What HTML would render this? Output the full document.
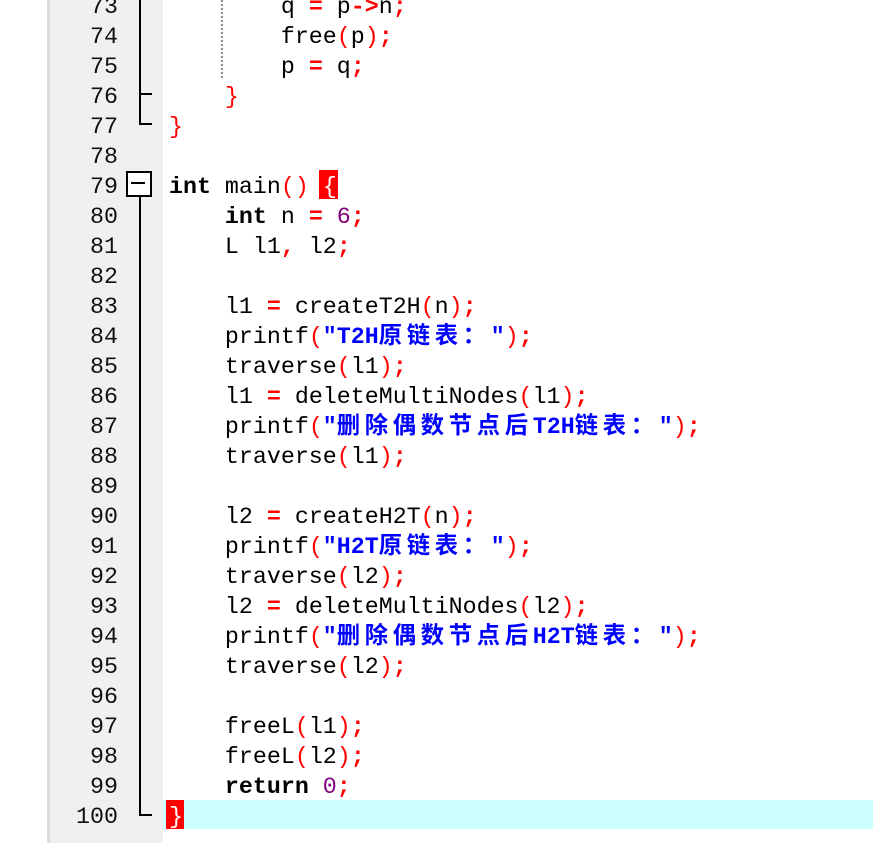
<!DOCTYPE html>
<html><head><meta charset="utf-8"><style>
body{margin:0;width:873px;height:843px;overflow:hidden;background:#fff;position:relative;font-family:"Liberation Mono","Noto Sans CJK SC",monospace;font-size:23.3px}
.g{position:absolute;left:47px;top:0;width:3px;height:843px;background:#dcdcdc}
.g2{position:absolute;left:50px;top:0;width:113px;height:843px;background:#f0f0f0}
.n{position:absolute;left:60px;width:58px;text-align:right;height:30px;line-height:30px;padding-top:2px;color:#111;box-sizing:border-box}
.l{position:absolute;left:169px;height:30px;line-height:30px;padding-top:2px;white-space:pre;color:#000;box-sizing:border-box}
.k{font-weight:bold}.o{color:#f00;font-weight:bold}.p{color:#f00}.d{color:#800080}
.s{color:#00f;font-weight:bold}.c{letter-spacing:4.7px;font-family:"Noto Sans CJK SC",sans-serif;font-size:23.3px;line-height:0}
.v{position:absolute;background:#000}
</style></head><body>
<div class="g"></div><div class="g2"></div>
<div style="position:absolute;left:163px;top:800px;width:710px;height:29px;background:#ccffff"></div>
<div style="position:absolute;left:166px;top:800px;width:18px;height:29px;background:#f00"></div>
<div style="position:absolute;left:319px;top:170px;width:19px;height:29px;background:#f00"></div>
<div style="position:absolute;left:221px;top:0;height:78px;border-left:2px dotted #888"></div>
<div class="v" style="left:139px;top:0;width:2px;height:125px"></div>
<div class="v" style="left:139px;top:93px;width:13px;height:2px"></div>
<div class="v" style="left:139px;top:123px;width:13px;height:2px"></div>
<div style="position:absolute;left:126px;top:171px;width:22px;height:22px;border:2px solid #000;background:#fff"></div>
<div class="v" style="left:131px;top:182px;width:14px;height:2px"></div>
<div class="v" style="left:139px;top:197px;width:2px;height:618px"></div>
<div class="v" style="left:139px;top:814px;width:13px;height:2px"></div>

<div class="n" style="top:-10px">73</div><div class="l" style="top:-10px">        q <span class="o">=</span> p<span class="o">-&gt;</span>n<span class="o">;</span></div>
<div class="n" style="top:20px">74</div><div class="l" style="top:20px">        free<span class="p">(</span>p<span class="p">)</span><span class="o">;</span></div>
<div class="n" style="top:50px">75</div><div class="l" style="top:50px">        p <span class="o">=</span> q<span class="o">;</span></div>
<div class="n" style="top:80px">76</div><div class="l" style="top:80px">    <span class="p">}</span></div>
<div class="n" style="top:110px">77</div><div class="l" style="top:110px"><span class="p">}</span></div>
<div class="n" style="top:140px">78</div>
<div class="n" style="top:170px">79</div><div class="l" style="top:170px"><span class="k">int</span> main<span class="p">()</span> <span class="p" style="color:#fff">{</span></div>
<div class="n" style="top:200px">80</div><div class="l" style="top:200px">    <span class="k">int</span> n <span class="o">=</span> <span class="d">6</span><span class="o">;</span></div>
<div class="n" style="top:230px">81</div><div class="l" style="top:230px">    L l1<span class="o">,</span> l2<span class="o">;</span></div>
<div class="n" style="top:260px">82</div>
<div class="n" style="top:290px">83</div><div class="l" style="top:290px">    l1 <span class="o">=</span> createT2H<span class="p">(</span>n<span class="p">)</span><span class="o">;</span></div>
<div class="n" style="top:320px">84</div><div class="l" style="top:320px">    printf<span class="p">(</span><span class="s">"T2H<span class="c">原链表：</span>"</span><span class="p">)</span><span class="o">;</span></div>
<div class="n" style="top:350px">85</div><div class="l" style="top:350px">    traverse<span class="p">(</span>l1<span class="p">)</span><span class="o">;</span></div>
<div class="n" style="top:380px">86</div><div class="l" style="top:380px">    l1 <span class="o">=</span> deleteMultiNodes<span class="p">(</span>l1<span class="p">)</span><span class="o">;</span></div>
<div class="n" style="top:410px">87</div><div class="l" style="top:410px">    printf<span class="p">(</span><span class="s">"<span class="c">删除偶数节点后</span>T2H<span class="c">链表：</span>"</span><span class="p">)</span><span class="o">;</span></div>
<div class="n" style="top:440px">88</div><div class="l" style="top:440px">    traverse<span class="p">(</span>l1<span class="p">)</span><span class="o">;</span></div>
<div class="n" style="top:470px">89</div>
<div class="n" style="top:500px">90</div><div class="l" style="top:500px">    l2 <span class="o">=</span> createH2T<span class="p">(</span>n<span class="p">)</span><span class="o">;</span></div>
<div class="n" style="top:530px">91</div><div class="l" style="top:530px">    printf<span class="p">(</span><span class="s">"H2T<span class="c">原链表：</span>"</span><span class="p">)</span><span class="o">;</span></div>
<div class="n" style="top:560px">92</div><div class="l" style="top:560px">    traverse<span class="p">(</span>l2<span class="p">)</span><span class="o">;</span></div>
<div class="n" style="top:590px">93</div><div class="l" style="top:590px">    l2 <span class="o">=</span> deleteMultiNodes<span class="p">(</span>l2<span class="p">)</span><span class="o">;</span></div>
<div class="n" style="top:620px">94</div><div class="l" style="top:620px">    printf<span class="p">(</span><span class="s">"<span class="c">删除偶数节点后</span>H2T<span class="c">链表：</span>"</span><span class="p">)</span><span class="o">;</span></div>
<div class="n" style="top:650px">95</div><div class="l" style="top:650px">    traverse<span class="p">(</span>l2<span class="p">)</span><span class="o">;</span></div>
<div class="n" style="top:680px">96</div>
<div class="n" style="top:710px">97</div><div class="l" style="top:710px">    freeL<span class="p">(</span>l1<span class="p">)</span><span class="o">;</span></div>
<div class="n" style="top:740px">98</div><div class="l" style="top:740px">    freeL<span class="p">(</span>l2<span class="p">)</span><span class="o">;</span></div>
<div class="n" style="top:770px">99</div><div class="l" style="top:770px">    <span class="k">return</span> <span class="d">0</span><span class="o">;</span></div>
<div class="n" style="top:800px">100</div><div class="l" style="top:800px"><span style="color:#fff">}</span></div>
</body></html>
